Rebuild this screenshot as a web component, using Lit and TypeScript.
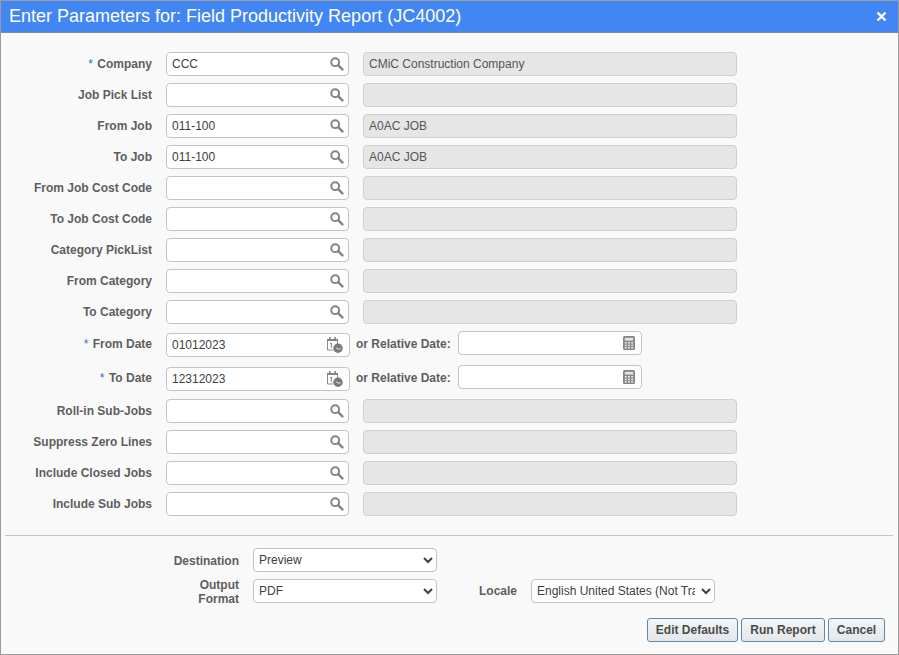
import { LitElement, html, css, svg } from "lit";
import { customElement } from "lit/decorators.js";

const search = svg`<svg width="14" height="14" viewBox="0 0 14 14"><circle cx="5.2" cy="5.2" r="3.9" fill="none" stroke="#858585" stroke-width="2"/><path d="M8.2 8.2 L12.4 12.4" stroke="#858585" stroke-width="2.5" stroke-linecap="round"/></svg>`;
const calendar = svg`<svg width="18" height="18" viewBox="0 0 18 18"><path d="M1.5 3.5H11.5V8M1.5 3.5V14H7" fill="none" stroke="#8a8a8a" stroke-width="1"/><rect x="1" y="3" width="11" height="2" fill="#858585"/><rect x="3" y="1" width="1.6" height="3" fill="#858585"/><rect x="8.4" y="1" width="1.6" height="3" fill="#858585"/><path d="M4 8 L5.4 7 V12" fill="none" stroke="#858585" stroke-width="1"/><circle cx="12" cy="12.3" r="4.7" fill="#7a7a7a"/><path d="M10.2 11.8 L12.4 13.2 L14.6 12.8" fill="none" stroke="#eee" stroke-width="1"/></svg>`;
const calc = svg`<svg width="14" height="16" viewBox="0 0 14 16"><rect x="1" y="1" width="12" height="14" rx="1.5" fill="#858585"/><rect x="2.8" y="2.8" width="8.4" height="2.8" fill="#e4e4e4"/><g fill="#e4e4e4"><rect x="2.8" y="7" width="2" height="1.6"/><rect x="6" y="7" width="2" height="1.6"/><rect x="9.2" y="7" width="2" height="1.6"/><rect x="2.8" y="9.6" width="2" height="1.6"/><rect x="6" y="9.6" width="2" height="1.6"/><rect x="9.2" y="9.6" width="2" height="1.6"/><rect x="2.8" y="12" width="2" height="1.6"/><rect x="6" y="12" width="2" height="1.6"/><rect x="9.2" y="12" width="2" height="1.6"/></g></svg>`;

type Row = { label: string; req?: boolean; value?: string; desc?: string; date?: boolean };
const rows: Row[] = [
  { label: "Company", req: true, value: "CCC", desc: "CMiC Construction Company" },
  { label: "Job Pick List" },
  { label: "From Job", value: "011-100", desc: "A0AC JOB" },
  { label: "To Job", value: "011-100", desc: "A0AC JOB" },
  { label: "From Job Cost Code" },
  { label: "To Job Cost Code" },
  { label: "Category PickList" },
  { label: "From Category" },
  { label: "To Category" },
  { label: "From Date", req: true, value: "01012023", date: true },
  { label: "To Date", req: true, value: "12312023", date: true },
  { label: "Roll-in Sub-Jobs" },
  { label: "Suppress Zero Lines" },
  { label: "Include Closed Jobs" },
  { label: "Include Sub Jobs" },
];

@customElement("app-root")
export class AppRoot extends LitElement {
  static styles = css`
    :host { display: block; width: 899px; height: 655px; font-family: "Liberation Sans", Arial, sans-serif; font-size: 12px; color: #404040; }
    * { box-sizing: border-box; }
    .dialog { width: 899px; height: 655px; border: 1px solid #9b9b9b; background: #f9f9f9; display: flex; flex-direction: column; }
    .title { height: 32px; flex: none; background: #4286f4; color: #fff; display: flex; align-items: center; justify-content: space-between; padding: 0 11px 0 8px; font-size: 18px; border-bottom: 1px solid #8a8a8a; }
    .close { display: flex; }
    .form { display: flex; flex-direction: column; gap: 7px; padding: 19px 0 0 0; }
    .row { display: flex; align-items: flex-start; }
    .label { width: 151px; flex: none; text-align: right; font-weight: bold; color: #5e5e5e; line-height: 24px; }
    .star { color: #2a6fdb; font-weight: normal; margin-right: 1px; }
    .field { width: 183px; height: 24px; margin-left: 14px; flex: none; display: flex; align-items: center; background: #fff; border: 1px solid #c4c4c4; border-radius: 4px; padding-right: 4px; }
    .field input { flex: 1; min-width: 0; height: 100%; border: 0; outline: 0; background: transparent; padding: 0 0 0 5px; font: 12px "Liberation Sans", Arial, sans-serif; color: #404040; }
    .field svg { display: block; flex: none; }
    .desc { width: 374px; height: 24px; margin-left: 14px; background: #e6e6e6; border: 1px solid #cfcfcf; border-radius: 4px; padding-left: 5px; line-height: 22px; color: #555; }
    .dateRow { height: 27px; }
    .dateRow .label, .dateRow .field.date { margin-top: 2px; }
    .dateRow .label { margin-top: 1px; }
    .field.date { width: 184px; padding-right: 5px; }
    .rel { font-weight: bold; color: #5e5e5e; margin-left: 6px; width: 102px; line-height: 24px; margin-top: 1px; }
    .field.calc { width: 184px; margin-left: 0; padding-right: 5px; }
    hr { border: 0; border-top: 1px solid #c4c4c4; margin: 19px 5px 0 4px; flex: none; }
    .foot { display: flex; flex-direction: column; gap: 7px; padding-top: 12px; }
    .label2 { width: 238px; flex: none; text-align: right; font-weight: bold; color: #5e5e5e; line-height: 14px; padding-top: 2px; display: flex; align-items: center; justify-content: flex-end; height: 24px; }
    select { height: 24px; width: 184px; margin-left: 14px; background: #fff; border: 1px solid #c4c4c4; border-radius: 4px; font: 12px "Liberation Sans", Arial, sans-serif; color: #404040; padding: 0 3px 0 1px; outline: 0; }
    .locale { width: 80px; font-weight: bold; color: #5e5e5e; line-height: 24px; text-align: right; margin-left: 0; flex: none; }
    select.loc { margin-left: 14px; }
    .actions { display: flex; justify-content: flex-end; gap: 3px; padding: 15px 13px 0 0; }
    button { height: 24px; padding: 0; border: 1px solid #5d8aa8; border-radius: 3px; background: linear-gradient(#f3f5f7, #e3e7eb); font: bold 12px "Liberation Sans", Arial, sans-serif; color: #4a4a4a; }
    .b1 { width: 91px; } .b2 { width: 84px; } .b3 { width: 57px; }
  `;

  private renderRow(r: Row) {
    const label = html`<div class="label">${r.req ? html`<span class="star">* </span>` : ""}${r.label}</div>`;
    if (r.date) {
      return html`<div class="row dateRow">${label}
        <div class="field date"><input .value=${r.value ?? ""} />${calendar}</div>
        <div class="rel">or Relative Date:</div>
        <div class="field calc"><input />${calc}</div>
      </div>`;
    }
    return html`<div class="row">${label}
      <div class="field"><input .value=${r.value ?? ""} />${search}</div>
      <div class="desc">${r.desc ?? ""}</div>
    </div>`;
  }

  render() {
    return html`<div class="dialog">
      <div class="title"><span>Enter Parameters for: Field Productivity Report (JC4002)</span>
        <span class="close"><svg width="11" height="11" viewBox="0 0 11 11"><path d="M1.5 1.5 L9.5 9.5 M9.5 1.5 L1.5 9.5" stroke="#fff" stroke-width="2.4"/></svg></span></div>
      <div class="form">${rows.map((r) => this.renderRow(r))}</div>
      <hr />
      <div class="foot">
        <div class="row"><div class="label2">Destination</div><select><option>Preview</option></select></div>
        <div class="row"><div class="label2">Output<br />Format</div><select><option>PDF</option></select>
          <div class="locale">Locale</div><select class="loc"><option>English United States (Not Translated)</option></select></div>
      </div>
      <div class="actions"><button class="b1">Edit Defaults</button><button class="b2">Run Report</button><button class="b3">Cancel</button></div>
    </div>`;
  }
}
